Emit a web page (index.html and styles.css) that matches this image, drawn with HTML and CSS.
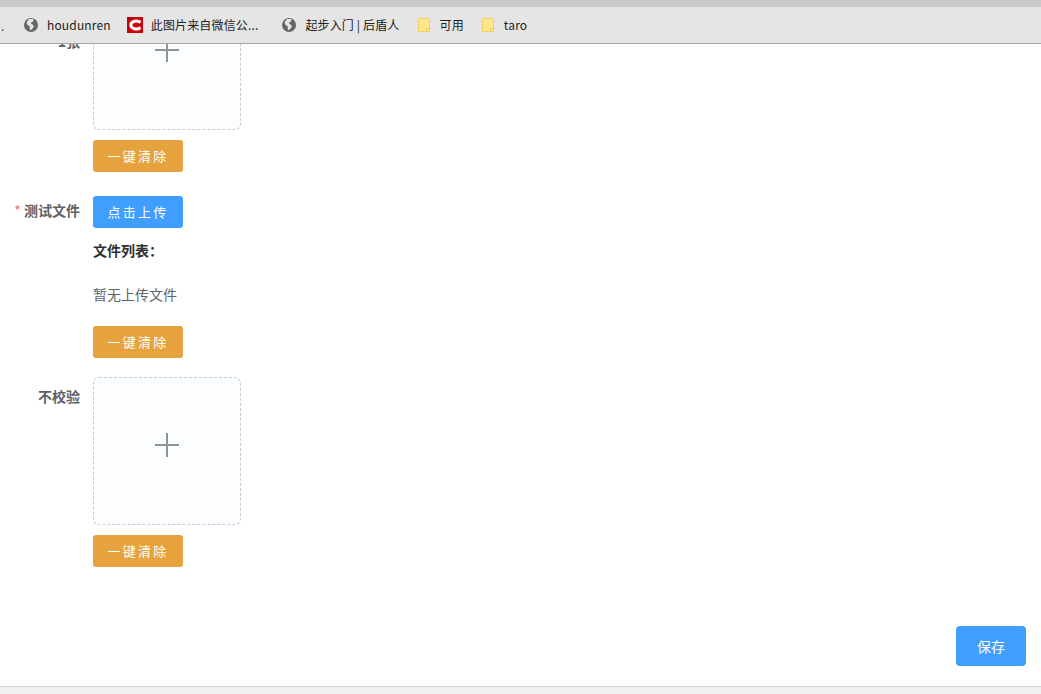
FILE: index.html
```html
<!DOCTYPE html>
<html lang="zh">
<head>
<meta charset="utf-8">
<title>上传</title>
<link rel="stylesheet" href="styles.css">
</head>
<body>
<div class="top-strip"></div>
<nav class="bookmarks">
  <span class="crumb">.</span>
  <a class="bm bm-1"><svg class="ic" viewBox="0 0 16 16"><circle cx="8" cy="8" r="7" fill="#666"/><path d="M6 2 10.500 2 10 4.500 7.500 6 9.500 7.500 11 9.500 9.500 11.500 7.500 13.500 6.500 11 7 9.500 4.500 8 3.500 5.500Z" fill="#e5e5e5"/></svg><span>houdunren</span></a>
  <a class="bm bm-2"><svg class="ic" viewBox="0 0 16 16"><rect width="16" height="16" fill="#c8000a"/><path d="M13.500 5.500A5.500 4 0 0 0 3.800 8 5.500 4 0 0 0 13.500 10.500" fill="none" stroke="#fff" stroke-width="3"/></svg><span>此图片来自微信公...</span></a>
  <a class="bm bm-3"><svg class="ic" viewBox="0 0 16 16"><circle cx="8" cy="8" r="7" fill="#666"/><path d="M6 2 10.500 2 10 4.500 7.500 6 9.500 7.500 11 9.500 9.500 11.500 7.500 13.500 6.500 11 7 9.500 4.500 8 3.500 5.500Z" fill="#e5e5e5"/></svg><span>起步入门 | 后盾人</span></a>
  <a class="bm bm-4"><svg class="ic folder" viewBox="0 0 12 14"><path d="M.5.500H11.500V13.500H.5Z" fill="#ffe68c" stroke="#f2cf62"/><path d="M8.500 13.500V10.500H11.500" fill="none" stroke="#f2cf62"/></svg><span>可用</span></a>
  <a class="bm"><svg class="ic folder" viewBox="0 0 12 14"><path d="M.5.500H11.500V13.500H.5Z" fill="#ffe68c" stroke="#f2cf62"/><path d="M8.500 13.500V10.500H11.500" fill="none" stroke="#f2cf62"/></svg><span>taro</span></a>
</nav>
<main class="content">
  <form class="form">
    <section class="row row-first">
      <label class="label">1张</label>
      <div class="field">
        <div class="upload"><svg class="plus" viewBox="0 0 24 24"><path d="M12 0V24M0 12H24"/></svg></div>
        <button type="button" class="btn btn-warn btn-clear">一键清除</button>
      </div>
    </section>
    <section class="row row-file">
      <label class="label"><i class="star">*</i> 测试文件</label>
      <div class="field">
        <button type="button" class="btn btn-primary">点击上传</button>
        <p class="list-title">文件列表：</p>
        <p class="empty">暂无上传文件</p>
        <button type="button" class="btn btn-warn">一键清除</button>
      </div>
    </section>
    <section class="row">
      <label class="label">不校验</label>
      <div class="field">
        <div class="upload"><svg class="plus" viewBox="0 0 24 24"><path d="M12 0V24M0 12H24"/></svg></div>
        <button type="button" class="btn btn-warn btn-clear">一键清除</button>
      </div>
    </section>
  </form>
  <div class="actions"><button type="button" class="save">保存</button></div>
</main>
<div class="bottom-strip"></div>
</body>
</html>
```
FILE: styles.css
```css
* { box-sizing: border-box; }
html, body { margin: 0; height: 100%; }
body {
  width: 1041px;
  height: 694px;
  overflow: hidden;
  display: flex;
  flex-direction: column;
  background: #fff;
  font-family: "Noto Sans CJK SC", "Noto Sans", sans-serif;
  font-size: 13px;
}
.top-strip { height: 7px; background: #c8c8c8; flex: none; }
.bookmarks {
  height: 37px;
  flex: none;
  display: flex;
  align-items: center;
  background: #e5e5e5;
  border-bottom: 1px solid #a6a6a6;
  font-size: 12px;
  color: #222;
}
.crumb { width: 23px; padding-left: 1px; color: #444; }
.bm { display: flex; align-items: center; gap: 8px; white-space: nowrap; letter-spacing: .15px; font-family: "Noto Sans CJK SC", "Open Sans", sans-serif; }
.bm span { line-height: 16px; }
.ic { width: 16px; height: 16px; flex: none; }
.folder { width: 12px; height: 14px; margin: 0 2px 0 1px; }
.bm-1 { margin-right: 16px; }
.bm-2 { margin-right: 23px; }
.bm-3 { margin-right: 17px; }
.bm-4 { margin-right: 17px; }
.content { flex: 1; min-height: 0; overflow: hidden; position: relative; display: flex; flex-direction: column; }
.form { flex: 1; }
.row { display: flex; margin-bottom: 24px; }
.row-first { margin-top: -62px; }
.row-file { margin-bottom: 19px; }
.label {
  width: 93px;
  flex: none;
  padding-right: 13px;
  text-align: right;
  line-height: 38px;
  font-weight: 700;
  color: #606266;
  font-size: 14px;
}
.row-first .label { padding-top: 40px; }
.row-file .label { line-height: 28px; }
.star { color: #f56c6c; font-style: normal; font-weight: 400; }
.field { display: flex; flex-direction: column; align-items: flex-start; }
.upload {
  width: 148px;
  height: 148px;
  border: 1px dashed #c0ccda;
  border-radius: 6px;
  background: #fbfdff;
  display: flex;
  align-items: center;
  justify-content: center;
  padding-bottom: 12px;
}
.plus { width: 24px; height: 24px; }
.plus path { fill: none; stroke: #8c939d; stroke-width: 2; }
.btn {
  width: 90px;
  height: 32px;
  border: 0;
  border-radius: 3px;
  color: #fff;
  font: 400 13px "Noto Sans CJK SC", sans-serif;
  letter-spacing: 2.300px;
  padding: 0 0 1px;
}
.btn-warn { background: #e6a23c; }
.btn-primary { background: #409eff; }
.btn-clear { margin-top: 10px; }
.list-title { margin: 12px 0 0; line-height: 20px; font-size: 14px; font-weight: 700; color: #303133; }
.empty { margin: 24px 0 22px; line-height: 20px; font-size: 14px; color: #606266; }
.actions { position: absolute; right: 15px; bottom: 20px; }
.save {
  width: 70px;
  height: 40px;
  border: 0;
  border-radius: 4px;
  background: #409eff;
  color: #fff;
  font: 400 14px "Noto Sans CJK SC", sans-serif;
}
.bottom-strip { height: 8px; flex: none; background: #f0f0f0; border-top: 1px solid #d4d4d4; }
```
